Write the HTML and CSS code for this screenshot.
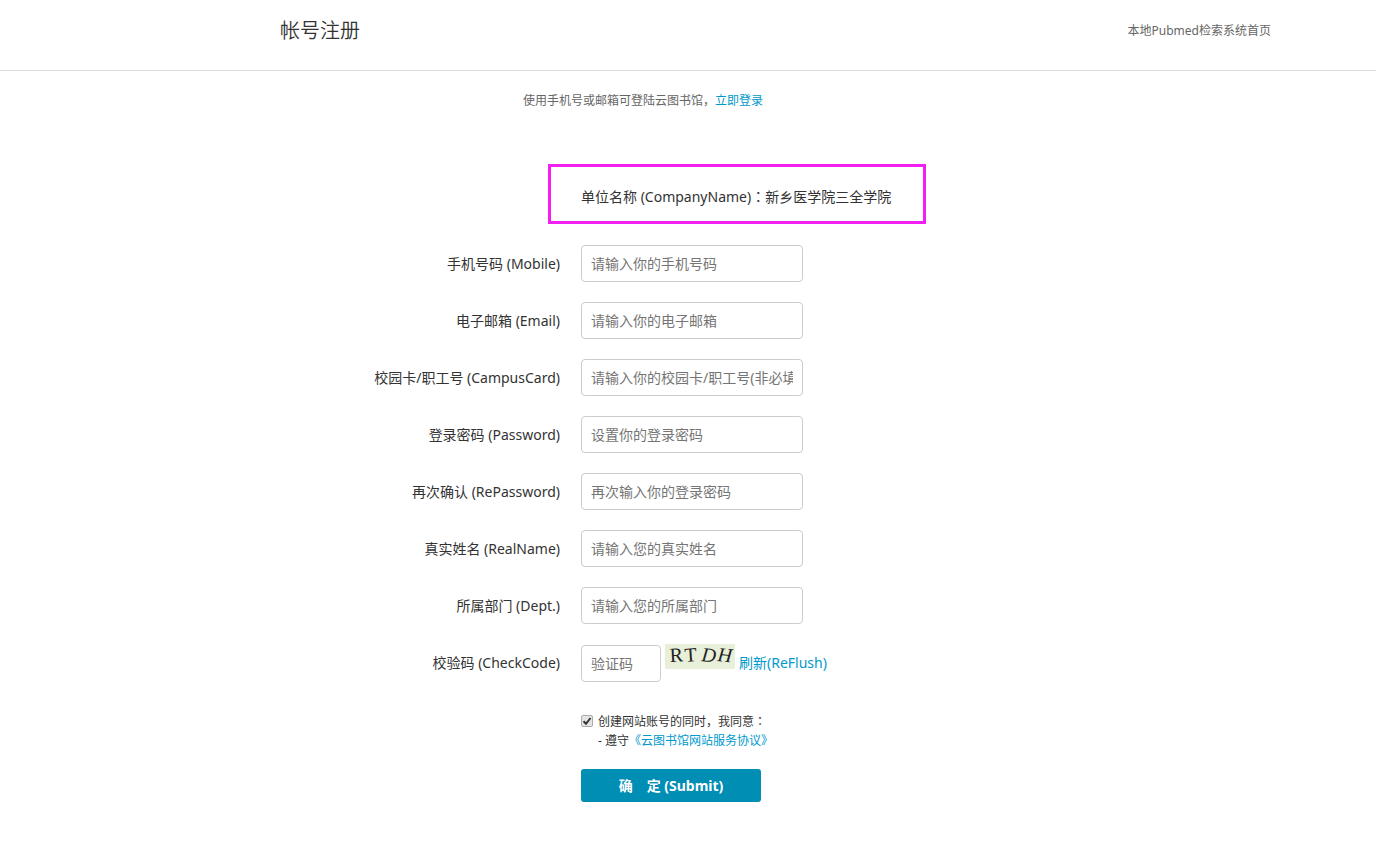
FILE: index.html
```html
<!DOCTYPE html>
<html lang="zh-CN">
<head>
    <meta charset="UTF-8">
    <meta name="viewport" content="width=device-width, initial-scale=1.0">
    <title>帐号注册</title>
    <link rel="stylesheet" href="styles.css">
</head>
<body>
    <header class="header">
        <div class="wrap header-inner">
            <h1>帐号注册</h1>
            <a class="home-link" href="#">本地Pubmed检索系统首页</a>
        </div>
    </header>

    <main class="wrap">
        <p class="tips">使用手机号或邮箱可登陆云图书馆，<a href="#">立即登录</a></p>

        <form class="reg-form" action="#" method="post">
            <div class="company">单位名称 (CompanyName)<span class="colon" lang="zh-TW">：</span>新乡医学院三全学院</div>

            <div class="row">
                <label for="mobile">手机号码 (Mobile)</label>
                <input class="text" type="text" id="mobile" placeholder="请输入你的手机号码">
            </div>
            <div class="row">
                <label for="email">电子邮箱 (Email)</label>
                <input class="text" type="text" id="email" placeholder="请输入你的电子邮箱">
            </div>
            <div class="row">
                <label for="card">校园卡/职工号 (CampusCard)</label>
                <input class="text" type="text" id="card" placeholder="请输入你的校园卡/职工号(非必填)">
            </div>
            <div class="row">
                <label for="password">登录密码 (Password)</label>
                <input class="text" type="password" id="password" placeholder="设置你的登录密码">
            </div>
            <div class="row">
                <label for="repassword">再次确认 (RePassword)</label>
                <input class="text" type="password" id="repassword" placeholder="再次输入你的登录密码">
            </div>
            <div class="row">
                <label for="realname">真实姓名 (RealName)</label>
                <input class="text" type="text" id="realname" placeholder="请输入您的真实姓名">
            </div>
            <div class="row">
                <label for="dept">所属部门 (Dept.)</label>
                <input class="text" type="text" id="dept" placeholder="请输入您的所属部门">
            </div>
            <div class="row">
                <label for="checkcode">校验码 (CheckCode)</label>
                <div class="code">
                    <input class="text text-short" type="text" id="checkcode" placeholder="验证码">
                    <svg class="captcha" width="70" height="25" viewBox="0 0 70 25">
                        <rect width="70" height="25" fill="#e9f0d9"/>
                        <g class="captcha-text">
                            <text x="5" y="18" transform="rotate(-3 5 18)">R</text>
                            <text x="20" y="18" transform="rotate(-4 20 18)">T</text>
                            <text x="36" y="17" font-style="italic" transform="rotate(6 36 17)">D</text>
                            <text x="52" y="17" font-style="italic" transform="rotate(6 52 17)">H</text>
                        </g>
                    </svg>
                    <a href="#">刷新(ReFlush)</a>
                </div>
            </div>

            <div class="agree">
                <input type="checkbox" id="agree" checked>
                <div>
                    <label for="agree">创建网站账号的同时，我同意<span class="colon" lang="zh-TW">：</span></label>
                    <div>- 遵守<a href="#">《云图书馆网站服务协议》</a></div>
                </div>
            </div>

            <button class="submit" type="submit">确　定 (Submit)</button>
        </form>
    </main>
</body>
</html>
```
FILE: styles.css
```css
* {
    box-sizing: border-box;
}

body {
    margin: 0;
    background-color: #fff;
    color: #333;
    font-family: "Noto Sans", "Noto Sans CJK SC", sans-serif;
    font-size: 14px;
    line-height: 20px;
}

a {
    color: #0099cc;
    text-decoration: none;
}

.colon {
    font-family: "Noto Sans CJK TC", sans-serif;
}

.wrap {
    max-width: 1376px;
    padding: 0 105px 0 280px;
}

.header {
    border-bottom: 1px solid #ddd;
}

.header-inner {
    display: flex;
    justify-content: space-between;
    align-items: center;
    height: 70px;
    padding-bottom: 8px;
}

h1 {
    margin: 0;
    font-size: 20px;
    font-weight: 350;
}

.header .home-link {
    color: #666;
    font-size: 12px;
}

.tips {
    margin: 20px 0 0 243px;
    color: #666;
    font-size: 12px;
}

.reg-form {
    display: flex;
    flex-direction: column;
    align-items: flex-start;
    margin-top: 53px;
}

.company {
    margin: 0 0 21px 268px;
    padding: 19px 32px 14px 30px;
    border: 3px solid #f21ff2;
}

.row {
    display: flex;
    align-items: center;
    margin-bottom: 20px;
}

.row > label {
    width: 280px;
    margin-right: 21px;
    text-align: right;
}

.text {
    width: 222px;
    height: 37px;
    padding: 0 9px;
    border: 1px solid #ccc;
    border-radius: 4px;
    background-color: #fff;
    color: #333;
    font: inherit;
}

.text::placeholder {
    color: #757575;
}

.text-short {
    width: 80px;
}

.code {
    display: flex;
    align-items: center;
    gap: 4px;
}

.code .text-short {
    margin-top: 1px;
}

.captcha {
    align-self: flex-start;
}

.captcha-text {
    fill: #222;
    font-family: "Liberation Serif", serif;
    font-size: 20px;
}

.agree {
    display: flex;
    gap: 5px;
    margin: 9px 0 0 301px;
    font-size: 12px;
    line-height: 19px;
}

.agree input {
    appearance: none;
    width: 12px;
    height: 12px;
    margin: 4px 0 0;
    border: 1px solid #aaa;
    border-radius: 2px;
    background: #e4e4e4 url("data:image/svg+xml,%3Csvg xmlns='http://www.w3.org/2000/svg' viewBox='0 0 10 10'%3E%3Cpath d='M1.5 5.2L4 7.8L8.5 2' fill='none' stroke='%23333' stroke-width='2'/%3E%3C/svg%3E") center / 10px 10px no-repeat;
}

.submit {
    width: 180px;
    height: 33px;
    margin: 19px 0 0 301px;
    padding: 0;
    border: 0;
    border-radius: 3px;
    background-color: #008eb5;
    color: #fff;
    font: inherit;
    font-weight: bold;
}
```
